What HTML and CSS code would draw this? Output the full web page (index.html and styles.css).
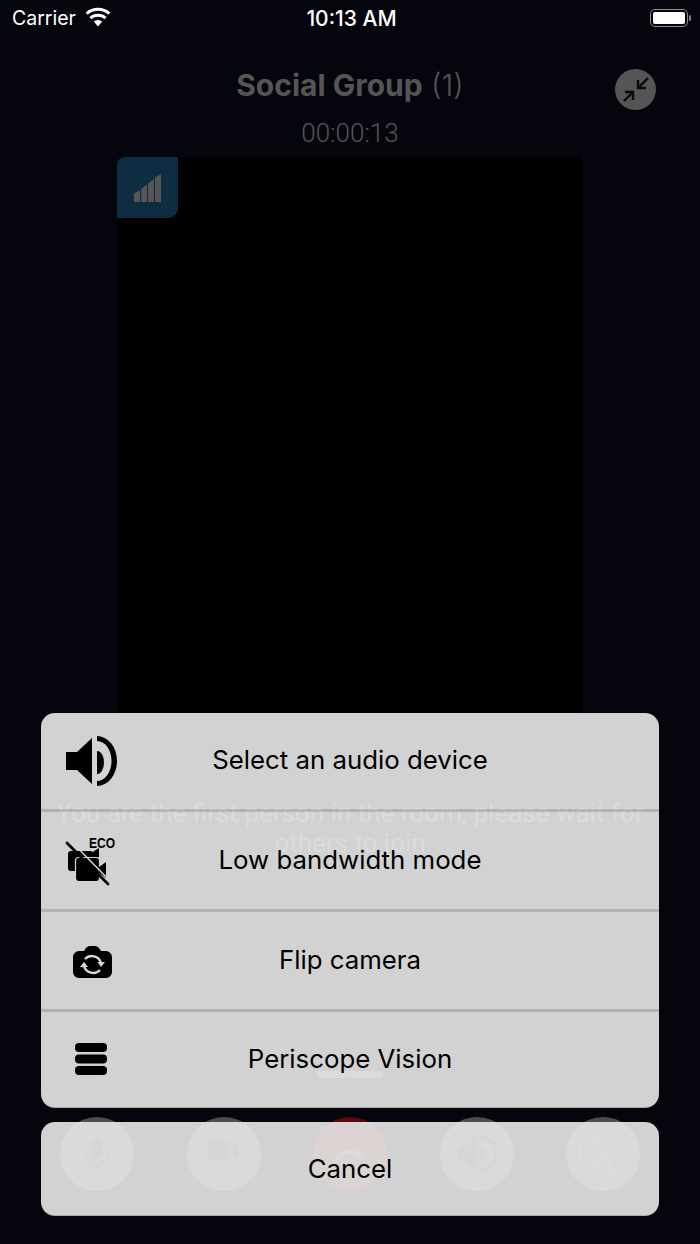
FILE: index.html
```html
<!DOCTYPE html>
<html lang="en">
<head>
<meta charset="utf-8">
<title>Social Group call</title>
<link rel="stylesheet" href="styles.css">
</head>
<body>
<div class="screen">
  <div class="status">
    <div class="status-left">
      <span class="carrier">Carrier</span>
      <svg class="wifi" viewBox="0 0 26 20" width="26" height="20"><path d="M13 19.500 8.800 14.600a6.400 6.400 0 0 1 8.400 0Z" fill="#fff"/><path d="M5.400 11.200a11.500 11.500 0 0 1 15.200 0" fill="none" stroke="#fff" stroke-width="3"/><path d="M1.600 6.600a17.400 17.400 0 0 1 22.800 0" fill="none" stroke="#fff" stroke-width="3"/></svg>
    </div>
    <span class="time">10:13 AM</span>
    <div class="status-right">
      <div class="battery"><div class="battery-level"></div></div>
      <div class="battery-tip"></div>
    </div>
  </div>

  <div class="header">
    <div class="title"><b>Social Group</b> <span>(1)</span></div>
    <div class="collapse">
      <svg viewBox="0 0 41 41" width="41" height="41" fill="none" stroke="#08080e" stroke-width="2.400"><path d="M33 9 23 19"/><path d="M23 11v8h8"/><path d="M9 32l9-9"/><path d="M10 23h8v8"/></svg>
    </div>
  </div>
  <div class="timer">00:00:13</div>

  <div class="video">
    <div class="signal">
      <svg viewBox="0 0 27 28" width="27" height="28" fill="#555"><path d="M0 19.500 6 16v12H0Z"/><path d="M7.200 15 13 10.500V28H7.200Z"/><path d="M14 9.500 20 5v23h-6Z"/><path d="M21 3.500 27 0v28h-6Z"/></svg>
    </div>
  </div>

  <p class="message">You are the first person in the room, please wait for others to join</p>

  <div class="pill"></div>

  <div class="controls">
    <div class="ctrl">
      <svg viewBox="0 0 40 40" width="40" height="40"><rect x="14" y="5" width="11" height="20" rx="5.500" fill="#2c2c34"/><path d="M9 19a11 11 0 0 0 22 0" fill="none" stroke="#2c2c34" stroke-width="2.400"/><rect x="18" y="29" width="3.500" height="7" fill="#2c2c34"/></svg>
    </div>
    <div class="ctrl">
      <svg viewBox="0 0 40 40" width="40" height="40" fill="#2c2c34"><rect x="3" y="7" width="22" height="19" rx="1"/><path d="M26 14 34 7.500V25.500L26 19Z"/></svg>
    </div>
    <div class="ctrl ctrl-end">
      <svg viewBox="0 0 40 40" width="40" height="40"><path d="M5 24c0-11 30-11 30 0l-1 3-7-2-1-4c-4-2-8-2-12 0l-1 4-7 2Z" fill="#555"/></svg>
    </div>
    <div class="ctrl">
      <svg viewBox="0 0 40 40" width="40" height="40" fill="#2c2c34"><path d="M1 13h7L19 2v36L8 27H1Z"/><path d="M23 1a19 19 0 0 1 0 38v-4a15 15 0 0 0 0-30Z"/><path d="M23 12a9 9 0 0 1 0 16Z"/></svg>
    </div>
    <div class="ctrl">
      <svg viewBox="0 0 60 60" width="60" height="60" fill="none" stroke="#6a5c48" stroke-width="3"><path d="M17 6C8 14 4 26 8 38c3 9 12 15 22 16 10-1 19-7 22-16 4-12 0-24-9-32"/><path d="M16 20c1 9 5 16 9 20l5-9 5 9c4-4 8-11 9-20"/><path d="M22 18c2-6 6-8 9-8 4 0 7 3 8 7l-9 3Z"/><path d="M20 50l10-19 10 19"/></svg>
    </div>
  </div>

  <div class="sheet">
    <div class="menu">
      <div class="row">
        <svg class="row-icon" viewBox="0 0 60 60" width="60" height="60" fill="#000"><path d="M4 21H15L30 7V53L15 39H4Z"/><path d="M35 5A20 25 0 0 1 35 55V50A14.500 20 0 0 0 35 10Z"/><path d="M35 20A7 11.500 0 0 1 35 43Z"/></svg>
        <span class="row-label">Select an audio device</span>
      </div>
      <div class="row">
        <svg class="row-icon" viewBox="0 0 60 60" width="60" height="60">
          <rect x="6" y="20" width="25" height="20" rx="3" fill="#000"/>
          <path d="M29 22l8-5v9l-8 3Z" fill="#000"/>
          <rect x="13.500" y="26.500" width="24" height="24" rx="3" fill="#000" stroke="#d3d3d3" stroke-width="1.200"/>
          <path d="M37 36l7-5v16l-7-5Z" fill="#000"/>
          <path d="M8 9 50 52" stroke="#d3d3d3" stroke-width="1.500"/>
          <path d="M5 12 46 53" stroke="#000" stroke-width="2.800" stroke-linecap="round"/>
          <text class="eco" x="27" y="17" textLength="26" lengthAdjust="spacingAndGlyphs">ECO</text>
        </svg>
        <span class="row-label">Low bandwidth mode</span>
      </div>
      <div class="row">
        <svg class="row-icon" viewBox="0 0 60 60" width="60" height="60">
          <path d="M17 20h5l2-3c1-1 2-2 4-2h5c2 0 3 1 4 2l2 3h5c3 0 6 3 6 6v15c0 3-3 6-6 6H17c-3 0-6-3-6-6V26c0-3 3-6 6-6Z" fill="#000"/>
          <path d="M23 28a9.500 9.500 0 0 1 16 4" fill="none" stroke="#d8d8d8" stroke-width="2.400"/>
          <path d="M38 39a9.500 9.500 0 0 1-16-4" fill="none" stroke="#d8d8d8" stroke-width="2.400"/>
          <path d="M35.500 31H43l-4 5Z" fill="#d8d8d8"/>
          <path d="M18 36h8l-4-5Z" fill="#d8d8d8"/>
        </svg>
        <span class="row-label">Flip camera</span>
      </div>
      <div class="row">
        <svg class="row-icon" viewBox="0 0 60 60" width="60" height="60" fill="#000"><rect x="13" y="13" width="32" height="9" rx="4"/><rect x="13" y="24.500" width="32" height="9" rx="4"/><rect x="13" y="36" width="32" height="9" rx="4"/></svg>
        <span class="row-label">Periscope Vision</span>
      </div>
    </div>
    <div class="cancel">Cancel</div>
  </div>
</div>
</body>
</html>
```

FILE: styles.css
```css
* { box-sizing: border-box; }
html, body { margin: 0; padding: 0; }
body { background: #05050d; font-family: Inter, Roboto, "Liberation Sans", sans-serif; }

.screen {
  position: relative;
  width: 700px;
  height: 1244px;
  display: flex;
  flex-direction: column;
  overflow: hidden;
  padding-bottom: 53px;
}

.status {
  height: 36px;
  flex: none;
  display: grid;
  grid-template-columns: 1fr auto 1fr;
  align-items: center;
  padding: 0 9px 0 12px;
  color: #fff;
  font-size: 19.500px;
}
.status-left { display: flex; align-items: center; gap: 9px; }
.wifi { margin-top: -3px; }
.time { font-size: 21px; font-weight: 500; }
.status-right { display: flex; justify-content: flex-end; align-items: center; gap: 1px; }
.battery {
  width: 38px;
  height: 18px;
  border: 1px solid #8c8c8c;
  border-radius: 5px;
  padding: 2px;
}
.battery-level { height: 100%; background: #fff; border-radius: 2px; }
.battery-tip { width: 2px; height: 6px; background: #8c8c8c; border-radius: 0 2px 2px 0; }

.header {
  margin-top: 33px;
  height: 41px;
  flex: none;
  display: grid;
  grid-template-columns: 1fr auto 1fr;
  align-items: center;
}
.title {
  grid-column: 2;
  font-size: 30px;
  line-height: 36px;
  color: #555;
  margin-top: -10px;
}
.title b { font-weight: 700; }
.title span { font-weight: 300; }
.collapse {
  grid-column: 3;
  justify-self: end;
  margin-right: 44px;
  width: 41px;
  height: 41px;
  border-radius: 50%;
  background: #555;
}
.collapse svg { display: block; }

.timer {
  margin-top: 9px;
  text-align: center;
  font-family: Roboto, sans-serif;
  font-size: 26px;
  line-height: 28px;
  font-weight: 300;
  color: #555;
  flex: none;
}

.video {
  margin: 10px auto 0;
  width: 466px;
  height: 633px;
  flex: none;
  background: #000;
  border-radius: 8px;
}
.signal {
  width: 61px;
  height: 61px;
  background: #0f2d42;
  border-radius: 8px 0 10px 0;
  padding: 17px 0 0 17px;
}
.signal svg { display: block; }

.message {
  margin: 8px auto 0;
  width: 620px;
  flex: none;
  text-align: center;
  font-family: Roboto, sans-serif;
  font-size: 26px;
  line-height: 30px;
  color: #555;
}

.pill {
  margin: auto auto 39px;
  width: 66px;
  height: 7px;
  border-radius: 4px;
  background: #555;
  flex: none;
}

.controls {
  padding: 0 60px;
  display: flex;
  justify-content: space-between;
  flex: none;
}
.ctrl {
  width: 74px;
  height: 74px;
  border-radius: 50%;
  background: #4d4d4d;
  display: flex;
  align-items: center;
  justify-content: center;
}
.ctrl-end { background: #5a0a0a; }

/* Action sheet over the call */
.sheet {
  position: absolute;
  left: 41px;
  right: 41px;
  bottom: 28px;
  display: flex;
  flex-direction: column;
  gap: 14px;
  color: #000;
}
.menu, .cancel {
  background: rgba(236, 236, 236, 0.89);
  border-radius: 14px;
  border-bottom: 1px solid rgba(0, 0, 0, 0.18);
}
.menu { height: 395px; display: flex; flex-direction: column; overflow: hidden; }
.row {
  flex: none;
  height: 100px;
  display: grid;
  grid-template-columns: 1fr auto 1fr;
  align-items: center;
  border-top: 3px solid rgba(0, 0, 0, 0.15);
}
.row:first-child { height: 96px; border-top: 0; }
.row:last-child { flex: 1; height: auto; }
.row-icon { display: block; margin-left: 21px; }
.row-label { font-size: 25.800px; line-height: 32px; margin-top: -2px; }
.eco { font-family: "Liberation Sans", sans-serif; font-weight: 700; font-size: 14px; fill: #000; }
.cancel {
  height: 94px;
  display: flex;
  align-items: center;
  justify-content: center;
  font-size: 25.800px;
}
```
